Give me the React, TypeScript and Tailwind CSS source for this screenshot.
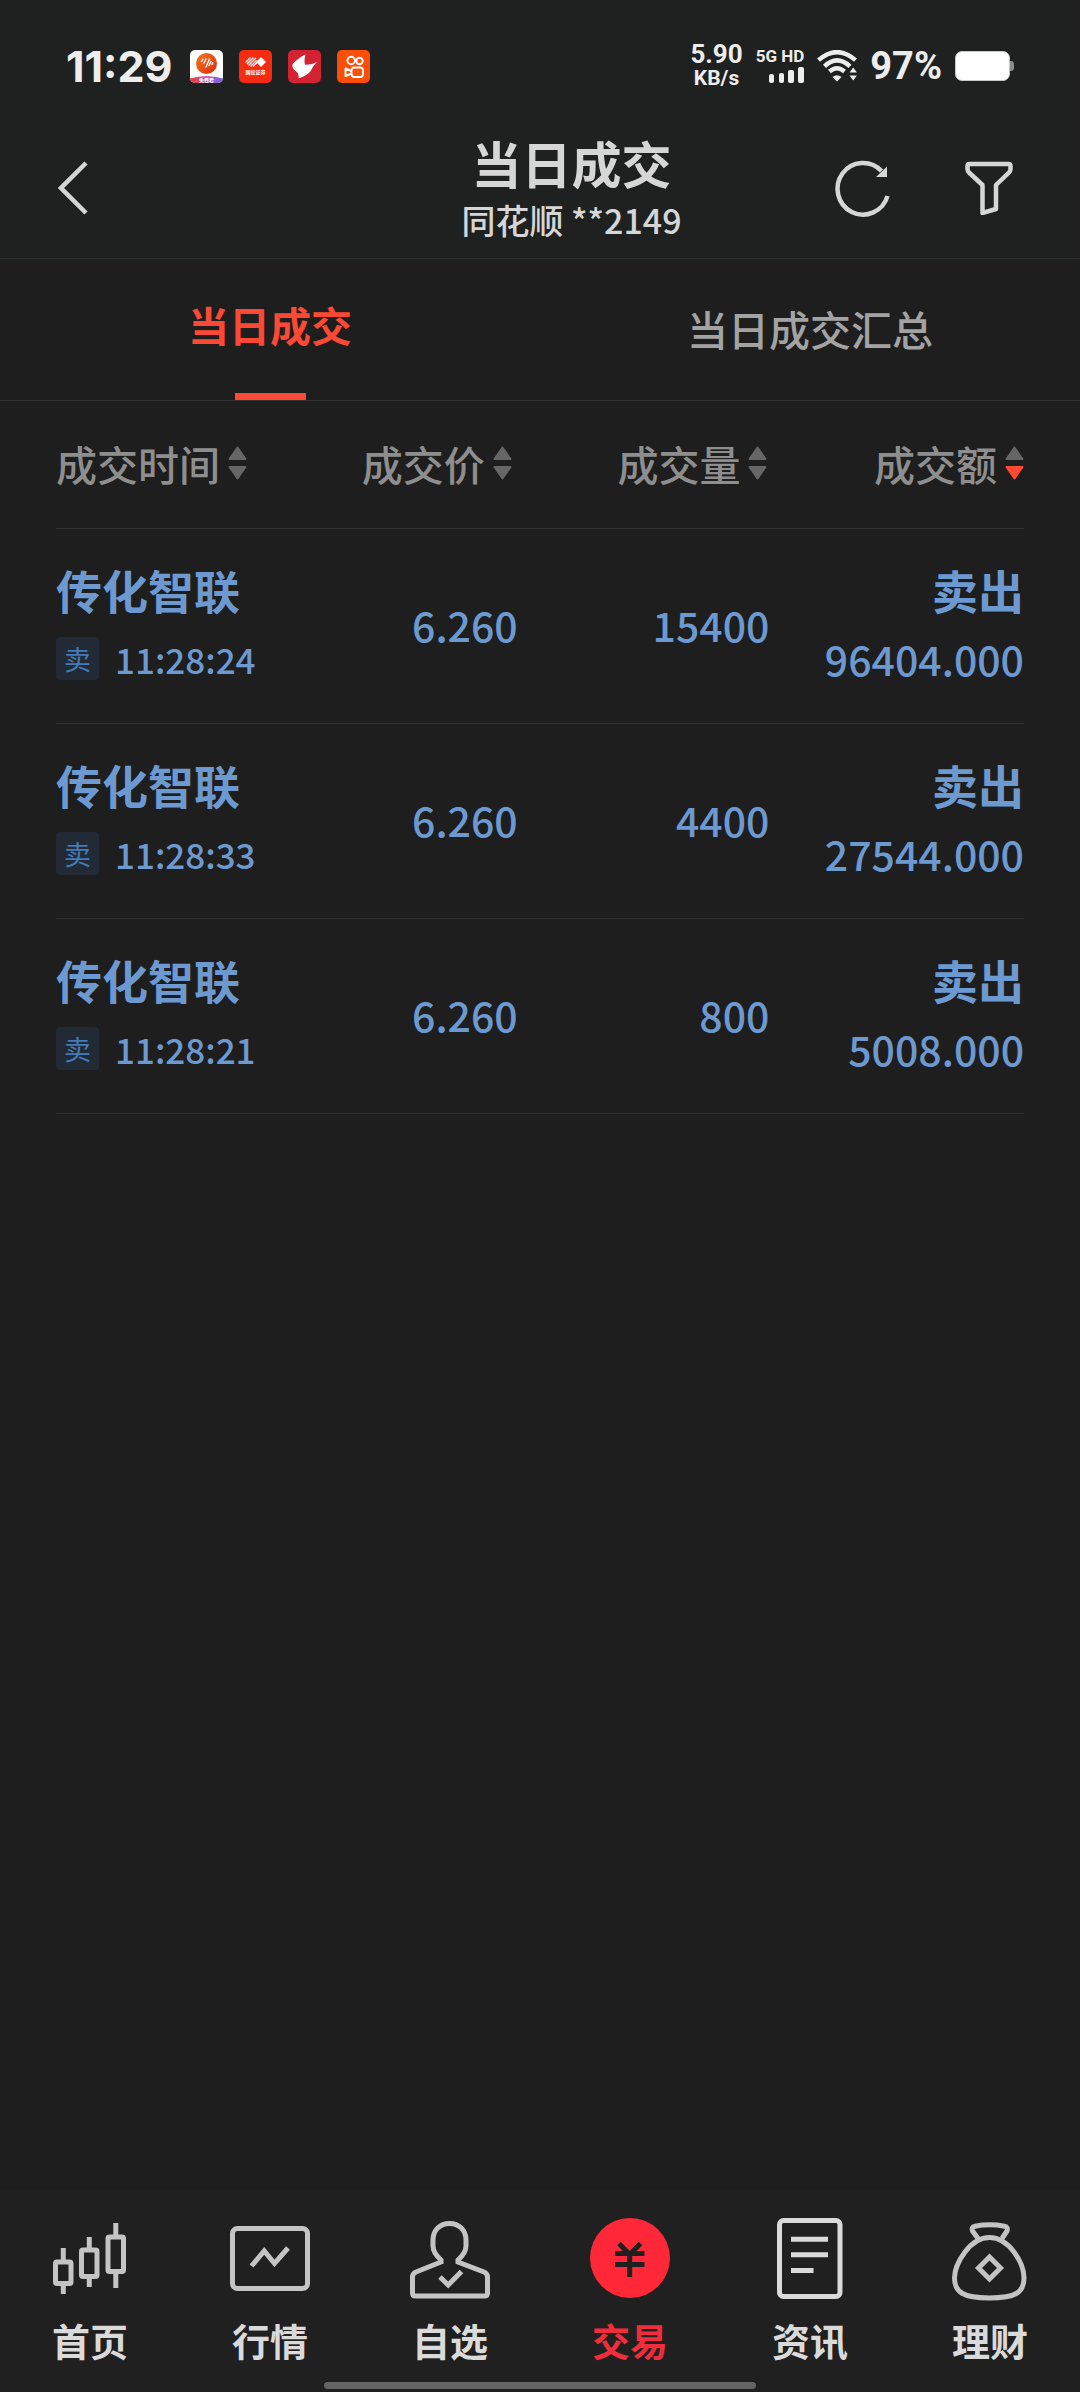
import { ReactNode } from "react";
import clsx from "clsx";

type SortType = "none" | "desc";

type DealType = {
  name: string;
  time: string;
  price: string;
  volume: string;
  amount: string;
};

const columns: { label: string; sort: SortType; className: string }[] = [
  { label: "成交时间", sort: "none", className: "w-[24%] text-left" },
  { label: "成交价", sort: "none", className: "w-[23.7%] text-right pr-1.5" },
  { label: "成交量", sort: "none", className: "w-[26%] text-right pr-0.5" },
  { label: "成交额", sort: "desc", className: "w-[26.3%] text-right" },
];

const deals: DealType[] = [
  { name: "传化智联", time: "11:28:24", price: "6.260", volume: "15400", amount: "96404.000" },
  { name: "传化智联", time: "11:28:33", price: "6.260", volume: "4400", amount: "27544.000" },
  { name: "传化智联", time: "11:28:21", price: "6.260", volume: "800", amount: "5008.000" },
];

const AppIcons = () => (
  <div className="flex gap-4">
    <svg viewBox="0 0 33 33" className="size-[33px]">
      <defs>
        <clipPath id="app-round">
          <rect width="33" height="33" rx="5" />
        </clipPath>
        <linearGradient id="app-band">
          <stop offset="0" stopColor="#f0382c" />
          <stop offset="0.5" stopColor="#c25bb4" />
          <stop offset="1" stopColor="#6a63e8" />
        </linearGradient>
        <linearGradient id="app-ball" x1="0" y1="0" x2="1" y2="1">
          <stop offset="0" stopColor="#f57a1c" />
          <stop offset="1" stopColor="#dc2a10" />
        </linearGradient>
      </defs>
      <g clipPath="url(#app-round)">
        <rect width="33" height="33" fill="#fff" />
        <circle cx="16.500" cy="13.500" r="10.500" fill="url(#app-ball)" />
        <path
          d="M11.500 11.500l1.500-2.500M14 13l2-4M16 17l3.500-8M19 15.500l2-4M22 14.500l.8-1.700"
          stroke="#fff"
          strokeWidth="1.400"
          strokeLinecap="round"
        />
        <path d="M0 28.500Q16.500 23.500 33 28.500V33H0z" fill="url(#app-band)" />
        <text x="16.500" y="32" fontSize="5" fontWeight="700" fill="#fff" textAnchor="middle">
          免费看
        </text>
      </g>
    </svg>
    <svg viewBox="0 0 33 33" className="size-[33px]">
      <rect width="33" height="33" rx="5" fill="#f62c12" />
      <path d="M22 7l5 5-5 5-5-5z" fill="#fff" />
      <path
        d="M6.500 12.500l5-5M8 14l6.500-6.500M9.500 15.500l7.500-7.500M11.500 16.500l6-6M14 16.500l4-4"
        stroke="#fff"
        strokeWidth="1.200"
      />
      <text x="16.500" y="24" fontSize="5" fontWeight="700" fill="#fff" textAnchor="middle">
        国投证券
      </text>
    </svg>
    <svg viewBox="0 0 33 33" className="size-[33px]">
      <rect width="33" height="33" rx="5" fill="#d32232" />
      <path
        d="M17.500 4.500C15 5.500 8 10 5 13.500c-1.500 2-.5 4 1 6 1.500 1.800 3 2.500 4 4 .8 1.500.4 3.500.8 4.500C15 27.500 21 24 23.500 19.500c1.200-2.200 2.500-4.500 5.500-7.500-3 1.500-7.500 3-12 2.800-.8-3-.5-6.500.5-10.300z"
        fill="#fff"
      />
    </svg>
    <svg viewBox="0 0 33 33" className="size-[33px]">
      <rect width="33" height="33" rx="5" fill="#fb4e08" />
      <g fill="none" stroke="#fff" strokeWidth="1.900" strokeLinejoin="round">
        <circle cx="14.200" cy="10.500" r="3.800" />
        <circle cx="22.500" cy="11" r="3.200" />
        <rect x="14.500" y="17.500" width="11.500" height="9.500" rx="3" />
        <path d="M14.500 21l-6-2.500v7.500l6-2.500" />
      </g>
    </svg>
  </div>
);

const WifiIcon = () => (
  <svg viewBox="0 0 40 32" className="h-8 w-10" fill="none" stroke="#ededed">
    <path d="M1.500 10.200Q20-6 38.500 10.200" strokeWidth="4.400" />
    <path d="M7.500 16.300Q20 4.500 33 16.300" strokeWidth="4.400" />
    <path d="M12.500 21.500Q20 15 27.500 21.500" strokeWidth="4.400" />
    <path d="M15.500 27Q20 23.500 24.500 27L20 31.500z" fill="#ededed" stroke="none" />
    <path d="M32.500 22.500l3.700-5 3.700 5zM32.500 25.500l3.700 5 3.700-5z" fill="#ededed" stroke="none" />
  </svg>
);

const StatusBar = () => (
  <div className="flex h-[118px] items-center justify-between pt-[14px] pr-[66px] pl-[66px] font-bold text-[#ededed]">
    <div className="flex items-center gap-[18px]">
      <span className="font-['Inter',sans-serif] text-[43px] leading-[44px]">11:29</span>
      <AppIcons />
    </div>
    <div className="flex items-center gap-[13px] font-['Roboto',sans-serif]">
      <div className="text-center leading-[24px]">
        <div className="text-[26px]">5.90</div>
        <div className="text-[21px]">KB/s</div>
      </div>
      <div className="flex flex-col items-end gap-1">
        <span className="text-[17px] leading-[14px]">5G HD</span>
        <svg viewBox="0 0 35 16" className="h-4 w-[35px]" fill="#ededed">
          <rect x="0" y="7" width="5" height="9" rx="2" />
          <rect x="10" y="6" width="5" height="10" rx="2" />
          <rect x="19" y="3" width="6" height="13" rx="2" />
          <rect x="29" y="0" width="6" height="16" rx="2" />
        </svg>
      </div>
      <WifiIcon />
      <span className="text-[38px] leading-[44px]">97%</span>
      <svg viewBox="0 0 59 30" className="h-[30px] w-[59px]">
        <path d="M54 10h2q3 0 3 3v4q0 3-3 3h-2z" fill="#8a8a8a" />
        <rect x=".5" y=".5" width="54" height="29" rx="6.500" fill="#fff" stroke="#c8c8c8" />
      </svg>
    </div>
  </div>
);

const Header = () => (
  <div className="grid h-[141px] grid-cols-[308px_1fr_245px] items-center border-b border-[#303231] text-[#d6d6d6]">
    <button type="button" aria-label="返回" className="justify-self-start pl-[58px]">
      <svg viewBox="0 0 30 54" className="h-[54px] w-[30px]" fill="none" stroke="#d6d6d6" strokeWidth="4.500">
        <path d="M28 2L3 27l25 25" />
      </svg>
    </button>
    <div className="flex flex-col items-center gap-[10px] pb-0.5 text-center">
      <h1 className="text-[50px] leading-[56px] font-bold">当日成交</h1>
      <p className="text-[34px] leading-[40px] font-medium">同花顺 **2149</p>
    </div>
    <div className="flex items-center justify-between pr-[67px]">
      <button type="button" aria-label="刷新">
        <svg viewBox="0 0 56 56" className="size-14 overflow-visible" fill="none" stroke="#d6d6d6" strokeWidth="4.500">
          <path d="M52.500 36A25.500 25.800 0 1 1 46.500 11" />
          <path d="M52 6.500V17H41z" fill="#d6d6d6" stroke="none" />
        </svg>
      </button>
      <button type="button" aria-label="筛选">
        <svg
          viewBox="0 0 48 54"
          className="h-[54px] w-12"
          fill="none"
          stroke="#d6d6d6"
          strokeWidth="4.500"
          strokeLinejoin="round"
        >
          <path d="M4.500 3h39q2 0 2 2v3q0 2-1.500 3.500L31 24v24l-13.500 4V24L4 11.500Q2.500 10 2.500 8V5q0-2 2-2z" />
        </svg>
      </button>
    </div>
  </div>
);

const Tabs = () => (
  <div role="tablist" className="grid h-[142px] grid-cols-2 border-b border-[#303030] text-[41px] leading-[48px]">
    <button type="button" role="tab" aria-selected="true" className="flex flex-col items-center text-[#fb4936]">
      <span className="flex flex-1 items-center pb-1 font-bold">当日成交</span>
      <span className="h-[7px] w-[71px] bg-[#fb4936]" />
    </button>
    <button type="button" role="tab" aria-selected="false" className="pb-1 font-medium text-[#a3a3a3]">
      当日成交汇总
    </button>
  </div>
);

const SortArrows = ({ sort }: { sort: SortType }) => (
  <svg viewBox="0 0 19 36" className="h-9 w-[19px]" strokeLinejoin="round" strokeWidth="2">
    <path d="M9.500 2.500L17.500 14h-16z" fill="#666" stroke="#666" />
    <path
      d="M9.500 33.500L17.500 22h-16z"
      fill={sort === "desc" ? "#ff4a33" : "#666"}
      stroke={sort === "desc" ? "#ff4a33" : "#666"}
    />
  </svg>
);

const DealTable = () => (
  <div className="px-14">
    <table className="w-full table-fixed">
      <thead>
        <tr className="h-[127px] border-b border-[#303030]">
          {columns.map(({ label, sort, className }) => (
            <th key={label} className={clsx("p-0 pb-0.5 align-middle font-medium", className)}>
              <button
                type="button"
                className="inline-flex items-center gap-2 align-middle text-[41px] leading-[48px] whitespace-nowrap text-[#8e8e8e]"
              >
                {label}
                <SortArrows sort={sort} />
              </button>
            </th>
          ))}
        </tr>
      </thead>
      <tbody className="text-[41px] font-medium text-[#6d99d1]">
        {deals.map(({ name, time, price, volume, amount }) => (
          <tr key={time} className="h-[195px] border-b border-[#303030]">
            <td className="p-0 pb-[10px] align-middle whitespace-nowrap">
              <div className="text-[46px] leading-[56px] font-bold">{name}</div>
              <div className="mt-5 flex items-center gap-4">
                <span className="flex h-[43px] w-[43px] items-center justify-center rounded-sm bg-[#212a35] text-[27px] leading-none font-normal text-[#457ab8]">
                  卖
                </span>
                <span className="text-[35px] leading-[43px]">{time}</span>
              </div>
            </td>
            <td className="p-0 pb-0.5 text-right align-middle">{price}</td>
            <td className="p-0 pb-0.5 text-right align-middle">{volume}</td>
            <td className="p-0 pb-[10px] text-right align-middle">
              <div className="text-[46px] leading-[56px] font-bold">卖出</div>
              <div className="mt-5 leading-[43px]">{amount}</div>
            </td>
          </tr>
        ))}
      </tbody>
    </table>
  </div>
);

const navItems: { label: string; active?: boolean; icon: ReactNode }[] = [
  {
    label: "首页",
    icon: (
      <g stroke="#c4c4c4" strokeWidth="5">
        <rect x="5.500" y="44" width="15.500" height="21.500" rx="1.500" />
        <rect x="31.500" y="32" width="15.500" height="26.500" rx="1.500" />
        <rect x="58" y="19" width="15.500" height="34.500" rx="1.500" />
        <path d="M13.300 30v12M13.300 67v9M39.300 19v11M39.300 60v9M65.800 5v12M65.800 55v15" />
      </g>
    ),
  },
  {
    label: "行情",
    icon: (
      <g stroke="#c4c4c4" strokeWidth="5">
        <rect x="2.500" y="10.500" width="75" height="60" rx="5" />
        <path d="M21.500 48L34.200 33 44.500 45.500 58 30" />
      </g>
    ),
  },
  {
    label: "自选",
    icon: (
      <g stroke="#c4c4c4" strokeWidth="5">
        <path d="M31 46V42C26 37.500 23 33 23 28V22C23 12 30 5.500 39.500 5.500S56 12 56 22V28C56 33 53 37.500 48 42V44L74 54Q77.500 55.500 77.500 59V75Q77.500 78 74.500 78H5.500Q2.500 78 2.500 75V59Q2.500 55.500 6 54L31 44" />
        <path d="M30 59L38.200 67 51.500 53.500" />
      </g>
    ),
  },
  {
    label: "交易",
    active: true,
    icon: (
      <>
        <circle cx="40" cy="40" r="40" fill="#ff2838" />
        <path
          d="M29 25.500L39.700 36.500 50.500 25.500M25 35.500H54.500M25 46.500H54.500M39.700 36V59"
          stroke="#202020"
          strokeWidth="5"
        />
      </>
    ),
  },
  {
    label: "资讯",
    icon: (
      <g stroke="#dadada" strokeWidth="5">
        <rect x="9.500" y="2.500" width="60.500" height="76" rx="4" />
        <path d="M21 21.300H58M21 36.700H58M21 52.500H43.500" />
      </g>
    ),
  },
  {
    label: "理财",
    icon: (
      <g stroke="#c4c4c4" strokeWidth="5">
        <path d="M28 20.500L22.500 13Q21 9 25 8.200Q39.500 5.500 54.500 8.200Q58.500 9 57 13L52 20.500" />
        <path d="M39.500 19.500C50 19.500 58 26 64 34C70 42 74 51 74 60C74 74 66 80 39.500 80S4.500 74 4.500 60C4.500 51 9 42 15 34C21 26 29 19.500 39.500 19.500z" />
        <path d="M39.500 39L50.500 50 39.500 61 28.500 50z" />
      </g>
    ),
  },
];

const BottomNav = () => (
  <nav className="relative mt-auto grid grid-cols-6 bg-[#202020] pt-[29px] pb-7">
    {navItems.map(({ label, active, icon }) => (
      <a key={label} href="#" className="flex flex-col items-center gap-[18px]">
        <svg viewBox="0 0 80 80" className="size-20 overflow-visible" fill="none">
          {icon}
        </svg>
        <span className={clsx("text-[38px] leading-[48px] font-bold", active ? "text-[#ef2d3c]" : "text-[#dadada]")}>
          {label}
        </span>
      </a>
    ))}
    <span className="absolute bottom-[3px] left-1/2 h-[7px] w-2/5 -translate-x-1/2 rounded-full bg-[#646464]" />
  </nav>
);

export default function App() {
  return (
    <div className="flex min-h-screen flex-col bg-[#1e1e1e] font-['Noto_Sans_CJK_SC',sans-serif]">
      <header className="bg-[#1f2120]">
        <StatusBar />
        <Header />
      </header>
      <main>
        <Tabs />
        <DealTable />
      </main>
      <BottomNav />
    </div>
  );
}
